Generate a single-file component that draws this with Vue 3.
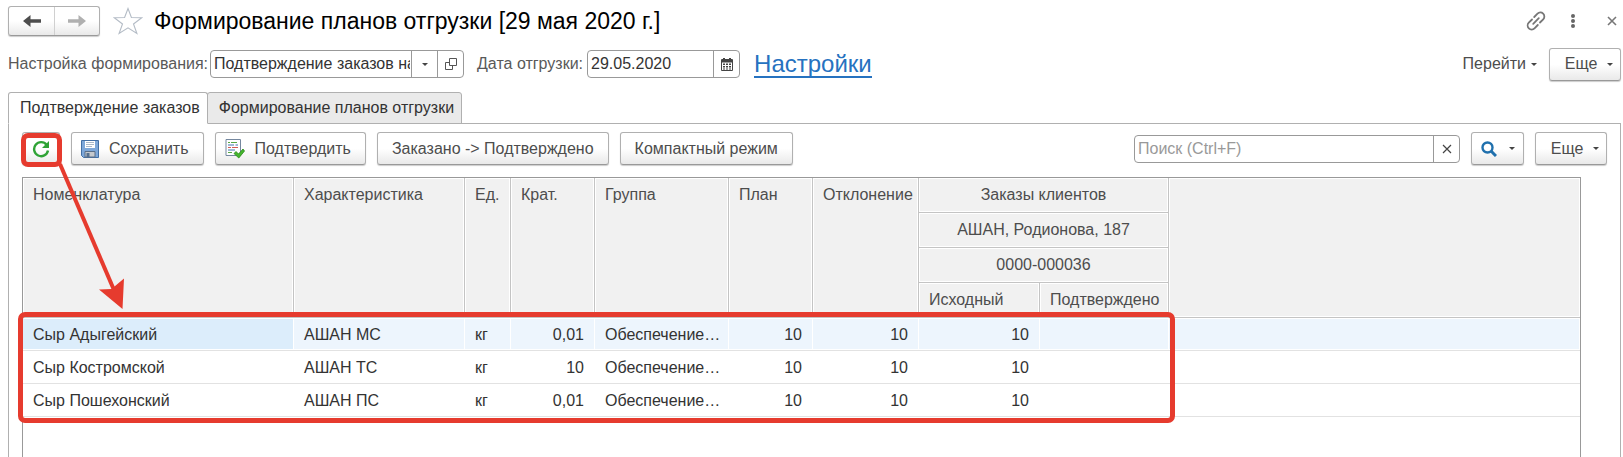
<script setup>
import { ref } from 'vue'

const setting = ref('Подтверждение заказов на')
const shipDate = ref('29.05.2020')
const search = ref('')

const rows = [
  { name: 'Сыр Адыгейский', spec: 'АШАН МС', unit: 'кг', mult: '0,01', group: 'Обеспечение…', plan: 10, diff: 10, source: 10, confirmed: '' },
  { name: 'Сыр Костромской', spec: 'АШАН ТС', unit: 'кг', mult: '10', group: 'Обеспечение…', plan: 10, diff: 10, source: 10, confirmed: '' },
  { name: 'Сыр Пошехонский', spec: 'АШАН ПС', unit: 'кг', mult: '0,01', group: 'Обеспечение…', plan: 10, diff: 10, source: 10, confirmed: '' }
]
</script>

<template>
  <div class="window">
    <header class="titlebar">
      <div class="nav">
        <button type="button" class="nav-btn" aria-label="Назад">
          <svg width="18" height="14" viewBox="0 0 18 14"><path d="M0 7 7.500 1V5.300H18V8.700H7.500V13Z" fill="#4d4d4d" /></svg>
        </button>
        <button type="button" class="nav-btn" aria-label="Вперед">
          <svg width="18" height="14" viewBox="0 0 18 14"><path d="M18 7 10.500 1V5.300H0V8.700H10.500V13Z" fill="#b0b0b0" /></svg>
        </button>
      </div>
      <button type="button" class="plain star" aria-label="В избранное">
        <svg width="30" height="28" viewBox="0 0 30 28"><path d="M15 1.500 18.400 10.500 28.700 10.800 20.500 17 23.900 26.500 15 20.800 6.100 26.500 9.500 17 1.300 10.800 11.600 10.500Z" fill="#fff" stroke="#b4bcc6" stroke-width="1.100" /></svg>
      </button>
      <h1>Формирование планов отгрузки [29 мая 2020 г.]</h1>
      <div class="window-tools">
        <button type="button" class="plain" aria-label="Получить ссылку">
          <svg width="20" height="20" viewBox="0 0 20 20" fill="none" stroke="#777" stroke-width="1.800" stroke-linecap="round"><path d="M8.200 6 11.500 2.700a3.900 3.900 0 0 1 5.700 5.600L14 11.500M11.800 14 8.500 17.300a3.900 3.900 0 0 1-5.700-5.600L6 8.500M7.200 12.800l5.600-5.600" /></svg>
        </button>
        <button type="button" class="plain" aria-label="Меню">
          <svg width="6" height="16" viewBox="0 0 6 16" fill="#666"><circle cx="3" cy="3" r="2" /><circle cx="3" cy="8" r="2" /><circle cx="3" cy="13" r="2" /></svg>
        </button>
        <button type="button" class="plain close" aria-label="Закрыть">
          <svg width="10" height="10" viewBox="0 0 10 10" stroke="#777" stroke-width="1.600"><path d="M1 1 9 9M9 1 1 9" /></svg>
        </button>
      </div>
    </header>

    <div class="settings">
      <label for="setting">Настройка формирования:</label>
      <div class="field field-setting">
        <input id="setting" v-model="setting" type="text" />
        <button type="button" aria-label="Выбрать из списка"><i class="caret"></i></button>
        <button type="button" aria-label="Открыть">
          <svg width="12" height="12" viewBox="0 0 12 12" fill="none" stroke="#555"><path d="M4.500.5H11.500V7.500H4.500ZM4.500 4.500H.5V11.500H7.500V7.500" /></svg>
        </button>
      </div>
      <label for="ship-date" class="date-label">Дата отгрузки:</label>
      <div class="field field-date">
        <input id="ship-date" v-model="shipDate" type="text" />
        <button type="button" aria-label="Календарь">
          <svg width="12" height="13" viewBox="0 0 12 13"><path d="M2 0h2v1h4V0h2v1h1a1 1 0 0 1 1 1v10a1 1 0 0 1-1 1H1a1 1 0 0 1-1-1V2a1 1 0 0 1 1-1h1Z" fill="#444" /><path d="M1 4.500H11V12H1Z" fill="#fff" /><path d="M2 5.500h2v1.500H2Zm3 0h2v1.500H5Zm3 0h2v1.500H8ZM2 8h2v1.500H2Zm3 0h2v1.500H5Zm3 0h2v1.500H8ZM2 10.500h2v1H2Zm3 0h2v1H5Zm3 0h2v1H8Z" fill="#444" /></svg>
        </button>
      </div>
      <a href="#" class="settings-link">Настройки</a>
      <div class="settings-right">
        <button type="button" class="plain goto">Перейти<i class="caret"></i></button>
        <button type="button" class="btn more">Еще<i class="caret"></i></button>
      </div>
    </div>

    <div class="tabs" role="tablist">
      <button type="button" role="tab" aria-selected="true" class="tab active">Подтверждение заказов</button>
      <button type="button" role="tab" aria-selected="false" class="tab">Формирование планов отгрузки</button>
    </div>

    <main class="panel">
      <div class="toolbar">
        <button type="button" class="btn refresh" aria-label="Обновить">
          <svg width="18" height="18" viewBox="0 0 18 18"><path d="M14.700 4.900A7 7 0 1 0 16 10.500" fill="none" stroke="#2fa336" stroke-width="2.400" /><path d="M17 1V8H10Z" fill="#2fa336" /></svg>
          <span class="mark mark-button"></span>
        </button>
        <button type="button" class="btn with-icon">
          <svg width="18" height="18" viewBox="0 0 18 18"><path d="M.5.5H17.500V17.500H2.500L.5 15.500Z" fill="#7da7d9" stroke="#426fa5" /><path d="M4 1H14V8H4Z" fill="#fff" /><path d="M5 2.500h8M5 4.500h8M5 6.500h6" stroke="#aab8c9" /><path d="M4 11.500H14V17H4Z" fill="#c5c9ce" stroke="#5a6f88" /><path d="M5.500 13h3v4h-3Z" fill="#56708f" /></svg>
          Сохранить
        </button>
        <button type="button" class="btn with-icon">
          <svg width="20" height="20" viewBox="0 0 20 20"><path d="M1 .5H15.500V16.500H1Z" fill="#fff" stroke="#75889f" /><path d="M3 3.500h2M6 3.500h6" stroke="#58a843" /><path d="M3 6h6M10.500 6h2.500" stroke="#3f74ad" /><path d="M3 8.500h3M7 8.500h6" stroke="#d35b55" /><path d="M3 11h7" stroke="#3f74ad" /><path d="M3 13.500h4" stroke="#58a843" /><path d="M9 14.500 11 12.500 13.500 15 18 10 19.500 12 13.800 19Z" fill="#45b52d" stroke="#278a16" stroke-width=".8" /></svg>
          Подтвердить
        </button>
        <button type="button" class="btn">Заказано -&gt; Подтверждено</button>
        <button type="button" class="btn">Компактный режим</button>
        <div class="toolbar-right">
          <div class="field field-search">
            <input v-model="search" type="text" aria-label="Поиск" placeholder="Поиск (Ctrl+F)" />
            <button type="button" aria-label="Очистить">
              <svg width="10" height="10" viewBox="0 0 10 10" stroke="#444" stroke-width="1.200"><path d="M1 1 9 9M9 1 1 9" /></svg>
            </button>
          </div>
          <button type="button" class="btn find" aria-label="Найти">
            <svg width="16" height="16" viewBox="0 0 16 16" fill="none" stroke="#2070ad"><circle cx="6.500" cy="6.500" r="5" stroke-width="2.400" /><path d="M10 10 15 15" stroke-width="3" /></svg>
            <i class="caret"></i>
          </button>
          <button type="button" class="btn more">Еще<i class="caret"></i></button>
        </div>
        <svg class="arrow" width="70" height="150" viewBox="0 0 70 150"><path d="M3 4 57 130" stroke="#e63b2e" stroke-width="4" /><path d="M42 129.500 54.500 129 67 118.500 65.500 149Z" fill="#e63b2e" /></svg>
      </div>

      <div class="grid">
        <table>
          <colgroup>
            <col class="c-name" /><col class="c-spec" /><col class="c-unit" /><col class="c-mult" /><col class="c-group" />
            <col class="c-plan" /><col class="c-diff" /><col class="c-source" /><col class="c-confirmed" /><col />
          </colgroup>
          <thead>
            <tr>
              <th rowspan="4">Номенклатура</th>
              <th rowspan="4">Характеристика</th>
              <th rowspan="4">Ед.</th>
              <th rowspan="4">Крат.</th>
              <th rowspan="4">Группа</th>
              <th rowspan="4">План</th>
              <th rowspan="4">Отклонение</th>
              <th colspan="2" class="center">Заказы клиентов</th>
              <th rowspan="4" class="rest"></th>
            </tr>
            <tr><th colspan="2" class="center">АШАН, Родионова, 187</th></tr>
            <tr><th colspan="2" class="center">0000-000036</th></tr>
            <tr><th>Исходный</th><th>Подтверждено</th></tr>
          </thead>
          <tbody>
            <tr v-for="(row, i) in rows" :key="row.name" :class="{ selected: i === 0 }">
              <td>{{ row.name }}</td>
              <td>{{ row.spec }}</td>
              <td>{{ row.unit }}</td>
              <td class="num">{{ row.mult }}</td>
              <td>{{ row.group }}</td>
              <td class="num">{{ row.plan }}</td>
              <td class="num">{{ row.diff }}</td>
              <td class="num">{{ row.source }}</td>
              <td class="num">{{ row.confirmed }}</td>
              <td class="rest"></td>
            </tr>
          </tbody>
        </table>
        <span class="mark mark-rows"></span>
      </div>
    </main>
  </div>
</template>

<style>
body {
  margin: 0;
  background: #fff;
}
</style>

<style scoped>
.window {
  display: flex;
  flex-direction: column;
  box-sizing: border-box;
  min-height: 100vh;
  padding: 6px 2px 0 8px;
  overflow: hidden;
  font-family: "Liberation Sans", Arial, sans-serif;
  font-size: 16px;
  line-height: 20px;
  color: #4d4d4d;
}
.window *,
.window *::before {
  box-sizing: border-box;
}
button,
input {
  margin: 0;
  padding: 0;
  border: 0;
  background: none;
  font: inherit;
  color: inherit;
}
button {
  display: inline-flex;
  align-items: center;
  justify-content: center;
  white-space: nowrap;
}
svg {
  display: block;
  flex: none;
}
.caret {
  width: 0;
  height: 0;
  border: 3px solid transparent;
  border-top-color: #444;
  border-bottom: 0;
}

.titlebar {
  display: flex;
  align-items: center;
  height: 30px;
}
.nav {
  display: flex;
  height: 30px;
  border: 1px solid #b0b0b0;
  border-bottom-color: #999;
  border-radius: 3px;
  background: linear-gradient(#fff 50%, #e9e9e9);
  box-shadow: 0 1px 1px #ccc;
}
.nav-btn {
  width: 45px;
}
.nav-btn + .nav-btn {
  border-left: 1px solid #d0d0d0;
}
.star {
  margin-left: 13px;
}
h1 {
  margin: 0 0 0 11px;
  font-size: 23px;
  line-height: 28px;
  font-weight: 400;
  color: #000;
  white-space: nowrap;
}
.window-tools {
  display: flex;
  align-items: center;
  gap: 24px;
  margin-left: auto;
  padding-right: 4px;
}
.close {
  margin-left: 7px;
}

.settings {
  display: flex;
  align-items: center;
  height: 34px;
  margin-top: 11px;
}
.settings label {
  white-space: nowrap;
  color: #595959;
}
.field {
  display: flex;
  height: 28px;
  border: 1px solid #999;
  border-radius: 4px;
  background: #fff;
  color: #333;
}
.field input {
  flex: 1;
  min-width: 0;
  padding: 0 1px 0 3px;
  outline: 0;
}
.field input::placeholder {
  color: #999;
  opacity: 1;
}
.field button {
  width: 26px;
  border-left: 1px solid #999;
}
.field-setting {
  width: 254px;
  margin-left: 2px;
}
.date-label {
  margin-left: 13px;
}
.field-date {
  width: 153px;
  margin-left: 4px;
}
.settings-link {
  margin-left: 14px;
  padding-top: 2px;
  border-bottom: 2px solid #2672c0;
  font-size: 24px;
  line-height: 24px;
  color: #2672c0;
  text-decoration: none;
}
.settings-right {
  display: flex;
  align-items: center;
  gap: 12px;
  margin-left: auto;
}
.goto {
  gap: 5px;
}
.btn {
  height: 33px;
  padding: 0 14px;
  border: 1px solid #b0b0b0;
  border-bottom-color: #999;
  border-radius: 3px;
  background: linear-gradient(#fff 50%, #e9e9e9);
  box-shadow: 0 1px 1px #ccc;
}
.more {
  gap: 10px;
  width: 72px;
  padding: 0 8px 0 16px;
}

.tabs {
  display: flex;
  margin-top: 11px;
}
.tab {
  height: 32px;
  padding: 0 7px 0 11px;
  border: 1px solid #b0b0b0;
  border-radius: 3px 3px 0 0;
  background: #eaeaea;
  color: #333;
}
.tab + .tab {
  margin-left: -1px;
}
.tab.active {
  z-index: 1;
  border-bottom-color: #fff;
  background: #fff;
}
.panel {
  display: flex;
  flex: 1;
  flex-direction: column;
  margin-top: -1px;
  padding: 8px 13px 0;
  border: 1px solid #b0b0b0;
  border-bottom: 0;
}
.toolbar {
  position: relative;
  display: flex;
  gap: 11px;
}
.refresh {
  position: relative;
  width: 38px;
  padding: 0;
}
.with-icon {
  gap: 10px;
  padding: 0 14px 0 9px;
}
.toolbar-right {
  display: flex;
  align-items: center;
  gap: 11px;
  margin-left: auto;
}
.field-search {
  width: 326px;
}
.find {
  gap: 12px;
  width: 53px;
  padding: 0;
}

.grid {
  position: relative;
  flex: 1;
  margin: 12px 26px 0 0;
  border: 1px solid #999;
  border-bottom: 0;
}
table {
  width: 100%;
  border-spacing: 0;
  table-layout: fixed;
}
.c-name { width: 271px; }
.c-spec { width: 171px; }
.c-unit { width: 46px; }
.c-mult { width: 84px; }
.c-group { width: 134px; }
.c-plan { width: 84px; }
.c-diff { width: 106px; }
.c-source { width: 121px; }
.c-confirmed { width: 129px; }
th,
td {
  overflow: hidden;
  padding: 0 10px;
  text-align: left;
  white-space: nowrap;
}
th {
  height: 35px;
  padding-top: 7px;
  border-right: 1px solid #c4c4c4;
  border-bottom: 1px solid #c4c4c4;
  background: #f1f1f1;
  box-shadow: inset 0 0 0 1px #fff;
  font-weight: 400;
  vertical-align: top;
}
th.center {
  text-align: center;
}
th.rest,
td.rest {
  border-right: 0;
}
td {
  height: 33px;
  padding-top: 2px;
  border-bottom: 1px solid #e2e2e2;
  color: #333;
}
td.num {
  padding-right: 11px;
  text-align: right;
}
.selected td {
  background: #edf5fd;
  box-shadow: inset -1px 0 #fff, inset 0 1px #fff, inset 0 -1px #fff;
}
.selected td:first-child {
  background: #dcedfb;
}

/* Red call-outs laid over the form */
.mark {
  position: absolute;
  border: 5px solid #e63b2e;
  border-radius: 7px;
  pointer-events: none;
}
.mark-button {
  inset: 0 -3px -3px -2px;
}
.mark-rows {
  top: 134px;
  left: -5px;
  width: 1157px;
  height: 111px;
}
.arrow {
  position: absolute;
  top: 28px;
  left: 35px;
  z-index: 2;
  pointer-events: none;
}
</style>
